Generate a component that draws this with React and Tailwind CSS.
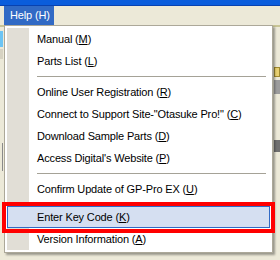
import React from 'react'

const ITEMS = [
  { label: 'Manual (', key: 'M', tail: ')' },
  { label: 'Parts List (', key: 'L', tail: ')' },
  { sep: true, h: 'h-[9px]' },
  { label: 'Online User Registration (', key: 'R', tail: ')' },
  { label: 'Connect to Support Site-"Otasuke Pro!" (', key: 'C', tail: ')' },
  { label: 'Download Sample Parts (', key: 'D', tail: ')' },
  { label: "Access Digital's Website (", key: 'P', tail: ')' },
  { sep: true, h: 'h-[9px]' },
  { label: 'Confirm Update of GP-Pro EX (', key: 'U', tail: ')' },
  { sep: true, h: 'h-[6px]' },
  { label: 'Enter Key Code (', key: 'K', tail: ')', active: true },
  { label: 'Version Information (', key: 'A', tail: ')' },
]

export default function App() {
  return (
    <div className="relative w-[280px] h-[260px] overflow-hidden bg-[#ece9d8] text-[11px] tracking-[-0.15px] text-black"
      style={{ fontFamily: '"Liberation Sans", Arial, sans-serif' }}>
      {/* title bar strip */}
      <div className="h-[6px] bg-[#0a5ddc] border-b border-[#0842b0]" />

      {/* menu bar */}
      <div className="h-[19px] flex items-stretch pl-[4px]">
        <div className="w-[50px] bg-[#316ac5] text-white flex items-center pl-[6px]">Help (H)</div>
      </div>

      {/* toolbar remnants behind the menu */}
      <div className="h-[2px] bg-[#c9c596]" />
      <div className="flex justify-between">
        <div className="flex flex-col gap-[2px] pt-[4px]">
          <div className="w-[3px] h-[16px] bg-[#6cc4f4]" />
          <div className="w-[3px] h-[10px] bg-[#d6d2c2]" />
          <div className="w-[3px] h-[80px]" />
          <div className="w-[3px] h-[28px] border-r border-[#8a8a8a]" />
        </div>
        <div className="flex flex-col gap-[3px] pt-[40px] w-[6px]">
          <div className="h-[10px] bg-[#e8d070] border border-[#a08a30]" />
          <div className="h-[14px] bg-[#9c9c9c]" />
          <div className="h-[40px]" />
          <div className="h-[12px] bg-[#707070]" />
        </div>
      </div>

      {/* dropdown menu */}
      <div className="absolute left-[4px] top-[25px] w-[269px] bg-white border border-[#aca899] p-[2px] shadow-[2px_2px_2px_rgba(0,0,0,0.35)]">
        {ITEMS.map((it, i) =>
          it.sep ? (
            <div key={i} className={`flex ${it.h}`}>
              <div className="w-[22px] bg-[#e1ded6]" />
              <div className="flex-1 flex items-center pl-[8px] pr-[4px]">
                <div className="h-px w-full bg-[#a5a297]" />
              </div>
            </div>
          ) : it.active ? (
            <div key={i} className="flex h-[22px] items-center bg-[#d5dff1] border border-[#316ac5] pl-[29px]">
              {it.label}<span className="underline">{it.key}</span>{it.tail}
            </div>
          ) : (
            <div key={i} className="flex h-[22px]">
              <div className="w-[22px] bg-[#e1ded6]" />
              <div className="flex items-center pl-[8px] whitespace-nowrap">
                {it.label}<span className="underline">{it.key}</span>{it.tail}
              </div>
            </div>
          )
        )}
      </div>

      {/* annotation box */}
      <div className="absolute left-[2px] top-[202px] w-[273px] h-[31px] border-[4px] border-[#ff0000]" />
    </div>
  )
}
